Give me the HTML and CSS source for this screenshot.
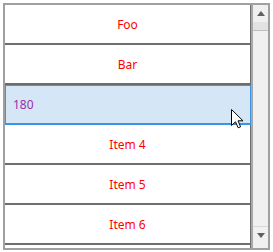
FILE: index.html
```html
<!DOCTYPE html>
<html lang="en">
<head>
    <meta charset="UTF-8">
    <title>List Box</title>
    <link rel="stylesheet" href="styles.css">
</head>
<body>
    <div class="list-box">
        <div class="list-items">
            <div class="list-item">Foo</div>
            <div class="list-item">Bar</div>
            <div class="list-item list-item-selected">180</div>
            <div class="list-item">Item 4</div>
            <div class="list-item">Item 5</div>
            <div class="list-item">Item 6</div>
            <div class="list-item"></div>
        </div>
        <div class="scroll-bar">
            <div class="scroll-button"><span class="arrow-up"></span></div>
            <div class="scroll-thumb"></div>
            <div class="scroll-track"></div>
            <div class="scroll-button scroll-button-down"><span class="arrow-down"></span></div>
        </div>
    </div>

    <!-- mouse pointer over the selected row -->
    <svg class="cursor" width="13" height="20" viewBox="0 0 13 20">
        <path d="M0.5,0.5 L0.5,16.5 L4.5,12.8 L7.2,18.8 L9.6,17.8 L7,11.8 L12,11.8 Z" fill="#fff" stroke="#000" stroke-width="1" stroke-linejoin="miter"/>
    </svg>
</body>
</html>
```

FILE: styles.css
```css
body {
    margin: 0;
    font-family: "Noto Sans", sans-serif;
    font-size: 12px;
    background: #fff;
}
.list-box {
    margin: 3px 0 0 3px;
    width: 267px;
    height: 247px;
    box-sizing: border-box;
    border: 2px solid #a0a0a0;
    display: flex;
    overflow: hidden;
}
.list-items {
    flex: 1;
    display: flex;
    flex-direction: column;
    overflow: hidden;
}
.list-item {
    flex: 0 0 40px;
    box-sizing: border-box;
    display: flex;
    align-items: center;
    justify-content: center;
    color: #ff0000;
    border-right: 1px solid #6e6e6e;
    border-bottom: 2px solid #6e6e6e;
    background: #fff;
}
.list-item-selected {
    justify-content: flex-start;
    padding-left: 7px;
    color: #9c2fa8;
    background: #d5e7f7;
    border: 1px solid #3a96e4;
    border-bottom-width: 2px;
}
.scroll-bar {
    width: 17px;
    box-sizing: border-box;
    border-left: 2px solid #a8a8a8;
    background: #f0f0f0;
    display: flex;
    flex-direction: column;
}
.scroll-button {
    height: 17px;
    display: flex;
    align-items: center;
    justify-content: center;
}
.scroll-button-down {
    border-top: 1px solid #d8d8d8;
    margin-bottom: 4px;
}
.scroll-thumb {
    height: 8px;
    background: #e2e2e2;
    border-bottom: 1px solid #bdbdbd;
}
.scroll-track {
    flex: 1;
}
.arrow-up {
    width: 0;
    height: 0;
    border-left: 4px solid transparent;
    border-right: 4px solid transparent;
    border-bottom: 5px solid #606060;
}
.arrow-down {
    width: 0;
    height: 0;
    border-left: 4px solid transparent;
    border-right: 4px solid transparent;
    border-top: 5px solid #606060;
}
.cursor {
    position: absolute;
    left: 231px;
    top: 109px;
}
```
